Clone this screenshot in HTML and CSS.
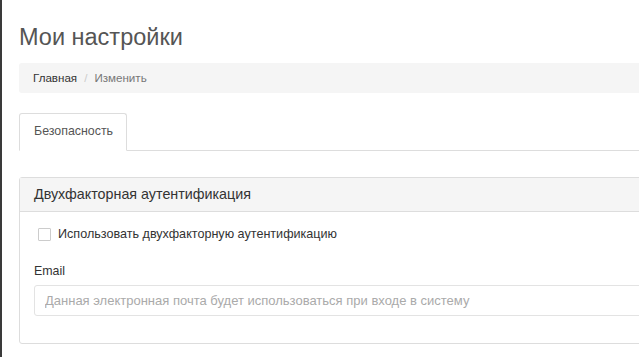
FILE: index.html
```html
<!DOCTYPE html>
<html lang="ru">
<head>
    <meta charset="UTF-8">
    <title>Мои настройки</title>
    <link rel="stylesheet" href="styles.css">
</head>
<body>

<div class="page">
    <h1 class="page-title">Мои настройки</h1>

    <ol class="breadcrumb">
        <li><a href="#">Главная</a></li>
        <li class="active">Изменить</li>
    </ol>

    <ul class="tabs">
        <li class="tab active">Безопасность</li>
    </ul>

    <div class="panel">
        <div class="panel-heading">Двухфакторная аутентификация</div>
        <div class="panel-body">
            <label class="checkbox">
                <input type="checkbox" id="twoFactor">
                <span>Использовать двухфакторную аутентификацию</span>
            </label>

            <label class="field-label" for="email">Email</label>
            <input type="text" id="email" class="form-control" placeholder="Данная электронная почта будет использоваться при входе в систему">
        </div>
    </div>
</div>

</body>
</html>
```

FILE: styles.css
```css
html, body {
    margin: 0;
    overflow: hidden;
}

body {
    font-family: "Liberation Sans", Arial, sans-serif;
    font-size: 13px;
    color: #333;
    background: #fff;
}

.page {
    border-left: 2px solid #3a3a3a;
    padding: 24px 0 0 17px;
    width: 700px;
    min-height: 400px;
}

.page-title {
    margin: 0;
    font-size: 23.5px;
    font-weight: normal;
    line-height: 26px;
    color: #555;
}

.breadcrumb {
    list-style: none;
    margin: 13px 0 0;
    padding: 0 14px;
    height: 30px;
    line-height: 30px;
    background: #f5f5f5;
    border-radius: 3px;
    font-size: 11.6px;
    display: flex;
}

.breadcrumb a {
    color: #333;
    text-decoration: none;
}

.breadcrumb li + li::before {
    content: "/";
    color: #ccc;
    padding: 0 7px;
}

.breadcrumb .active {
    color: #777;
}

.tabs {
    list-style: none;
    margin: 20px 0 0;
    padding: 0;
    display: flex;
    border-bottom: 1px solid #ddd;
}

.tab {
    font-size: 12.4px;
    padding: 0 14px;
    height: 36px;
    line-height: 34px;
    margin-bottom: -1px;
    width: 78px;
    border: 1px solid #ddd;
    border-bottom-color: #fff;
    border-radius: 3px 3px 0 0;
    background: #fff;
    color: #555;
}

.panel {
    margin-top: 26px;
    border: 1px solid #ddd;
    border-radius: 3px;
}

.panel-heading {
    background: #f5f5f5;
    border-bottom: 1px solid #ddd;
    height: 33px;
    line-height: 33px;
    padding: 0 14px;
    font-size: 14.3px;
    color: #333;
}

.panel-body {
    padding: 14px 14px 27px;
}

.checkbox {
    display: flex;
    align-items: center;
    height: 16px;
    padding-left: 4px;
    font-size: 12.6px;
}

.checkbox input {
    appearance: none;
    width: 13px;
    height: 13px;
    margin: 0 7px 0 0;
    border: 1px solid #ccc;
    border-radius: 1px;
    background: #fff;
}

.field-label {
    display: block;
    margin-top: 21px;
    font-size: 12.4px;
    line-height: 16px;
}

.form-control {
    display: block;
    box-sizing: border-box;
    width: 100%;
    margin-top: 6px;
    height: 31px;
    padding: 0 10px;
    border: 1px solid #e3e3e3;
    border-radius: 3px;
    font-family: inherit;
    font-size: 13px;
    color: #333;
}

.form-control::placeholder {
    color: #aaa;
}
```
